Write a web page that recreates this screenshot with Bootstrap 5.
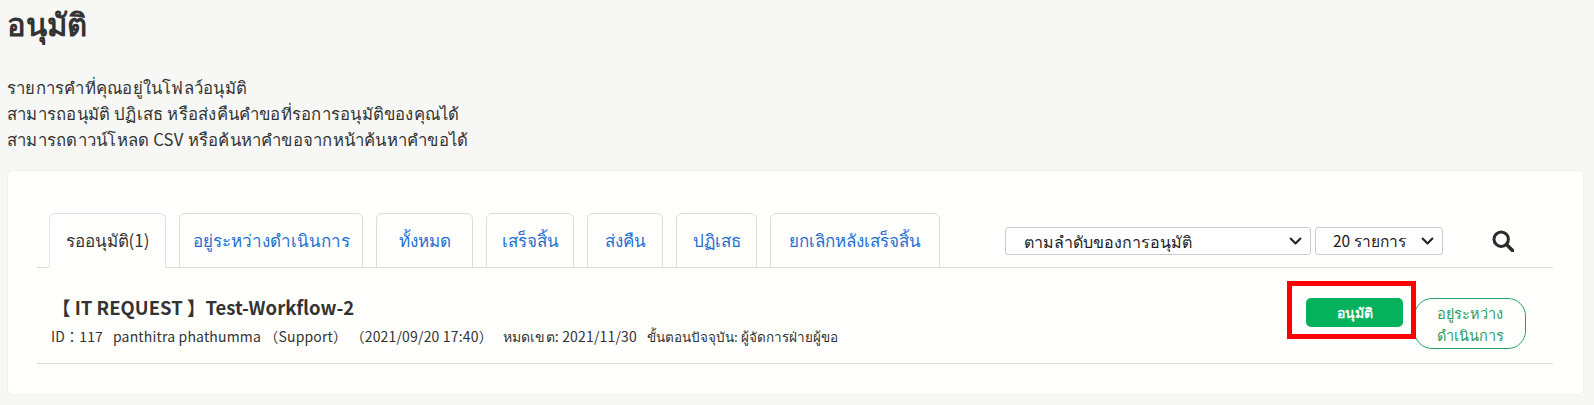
<!DOCTYPE html>
<html lang="th">
<head>
  <meta charset="UTF-8">
  <title>อนุมัติ</title>
  <meta name="viewport" content="width=device-width, initial-scale=1">
  <link href="https://cdn.jsdelivr.net/npm/bootstrap@5.3.0/dist/css/bootstrap.min.css" rel="stylesheet">
  <style>
    body { background: #f7f8f5; color: #333; font-family: "Noto Sans CJK JP", "Noto Sans", sans-serif; font-size: 16px; overflow: hidden; }
    .page-wrap { padding: 0 10px 0 7px; }
    .page-title { font-size: 31px; font-weight: 700; line-height: 1; padding-top: 7px; margin: 0 0 36px; }
    .intro { font-size: 16.7px; letter-spacing: .23px; line-height: 26px; margin: 0 0 18px; }
    .panel { background: #fffffe; border: 1px solid #f0f0ee; border-radius: 6px; padding: 42px 30px 30px 29px; height: 225px; }
    .tab-row { border-bottom: 1px solid #ddd; padding-left: 12px; height: 55px; }
    .tab-row .nav-tabs { border: 0; gap: 13px; flex-wrap: nowrap; }
    .tab-row .nav-link { height: 55px; margin-bottom: -1px; padding: 0; text-align: center; font-size: 17px; line-height: 51px; color: #1f6fd1; border: 1px solid #ddd; border-radius: 6px 6px 0 0; white-space: nowrap; }
    .tab-row .nav-link.active { color: #333; background: #fffffe; border-bottom-color: #fffffe; }
    .tab-wait { width: 117px; }
    .tab-progress { width: 184px; }
    .tab-all { width: 97px; }
    .tab-done { width: 88px; }
    .tab-back { width: 76px; }
    .tab-reject { width: 81px; }
    .tab-cancel { width: 170px; }
    .sel { width: 306px; height: 28px; padding: 0 30px 0 18px; font-size: 16px; line-height: 1.4; color: #222; background-color: #fff; border-color: #ccc; border-radius: 3px; background-position: right 8px center; background-size: 13px 10px; background-image: url("data:image/svg+xml,%3csvg xmlns='http://www.w3.org/2000/svg' viewBox='0 0 16 12'%3e%3cpath fill='none' stroke='%23222' stroke-width='2.6' stroke-linecap='round' stroke-linejoin='round' d='M2 3l6 6 6-6'/%3e%3c/svg%3e"); }
    .sel-count { width: 128px; padding-left: 17px; font-size: 15.5px; }
    .tools { margin-top: 14px; gap: 4px; padding-right: 39px; }
    .search-ico { margin-left: 45px; width: 22px; height: 22px; margin-top: 3px; }
    .req-row { border-bottom: 1px solid #ddd; height: 96px; padding: 26px 27px 0 14px; }
    .req-title { font-size: 18.5px; font-weight: 700; line-height: 26px; margin: 0 0 6px 1px; }
    .req-meta { font-size: 14px; line-height: 20px; white-space: pre; }
    .meta-info { letter-spacing: .17px; }
    .meta-step { font-size: 13.5px; }
    .btn-approve { width: 97px; height: 29px; padding: 0; font-size: 14px; font-weight: 700; color: #fff; background: #05b25c; border: 0; border-radius: 5px; }
    .status-pill { width: 112px; height: 51px; margin-left: 11px; border: 1px solid #27a06a; border-radius: 18px; color: #2a9d63; font-size: 14.5px; font-weight: 500; line-height: 22px; text-align: center; padding-top: 3px; background: #fffffe; }
    .actions { position: relative; margin-top: 4px; height: 51px; }
    .red-mark { position: absolute; left: -19px; top: -17px; width: 129px; height: 58px; border: 5px solid #f00; pointer-events: none; }
  </style>
</head>
<body>
  <div class="page-wrap">
    <h1 class="page-title">อนุมัติ</h1>
    <p class="intro">รายการคำที่คุณอยู่ในโฟลว์อนุมัติ<br>สามารถอนุมัติ ปฏิเสธ หรือส่งคืนคำขอที่รอการอนุมัติของคุณได้<br>สามารถดาวน์โหลด CSV หรือค้นหาคำขอจากหน้าค้นหาคำขอได้</p>

    <div class="panel">
      <div class="tab-row d-flex justify-content-between">
        <ul class="nav nav-tabs">
          <li class="nav-item"><a class="nav-link active tab-wait" href="#">รออนุมัติ(1)</a></li>
          <li class="nav-item"><a class="nav-link tab-progress" href="#">อยู่ระหว่างดำเนินการ</a></li>
          <li class="nav-item"><a class="nav-link tab-all" href="#">ทั้งหมด</a></li>
          <li class="nav-item"><a class="nav-link tab-done" href="#">เสร็จสิ้น</a></li>
          <li class="nav-item"><a class="nav-link tab-back" href="#">ส่งคืน</a></li>
          <li class="nav-item"><a class="nav-link tab-reject" href="#">ปฏิเสธ</a></li>
          <li class="nav-item"><a class="nav-link tab-cancel" href="#">ยกเลิกหลังเสร็จสิ้น</a></li>
        </ul>
        <div class="tools d-flex align-items-start">
          <select class="form-select sel"><option>ตามลำดับของการอนุมัติ</option></select>
          <select class="form-select sel sel-count"><option>20 รายการ</option></select>
          <svg class="search-ico" viewBox="0 0 22 22" fill="none" stroke="#2b2b2b" stroke-width="3">
            <circle cx="9.2" cy="9.2" r="7.2"/>
            <path d="M14.5 14.5 L20.5 20.5" stroke-linecap="round" stroke-width="3.6"/>
          </svg>
        </div>
      </div>

      <div class="req-row d-flex justify-content-between">
        <div>
          <div class="req-title">【 IT REQUEST 】Test-Workflow-2</div>
          <div class="req-meta"><span class="meta-info">ID：117   panthitra phathumma （Support） （2021/09/20 17:40）   หมดเขต: 2021/11/30   </span><span class="meta-step">ขั้นตอนปัจจุบัน: ผู้จัดการฝ่ายผู้ขอ</span></div>
        </div>
        <div class="actions d-flex align-items-start">
          <button class="btn btn-approve" type="button">อนุมัติ</button>
          <div class="status-pill">อยู่ระหว่าง<br>ดำเนินการ</div>
          <div class="red-mark"></div>
        </div>
      </div>
    </div>
  </div>
  <script src="https://cdn.jsdelivr.net/npm/bootstrap@5.3.0/dist/js/bootstrap.bundle.min.js"></script>
</body>
</html>
